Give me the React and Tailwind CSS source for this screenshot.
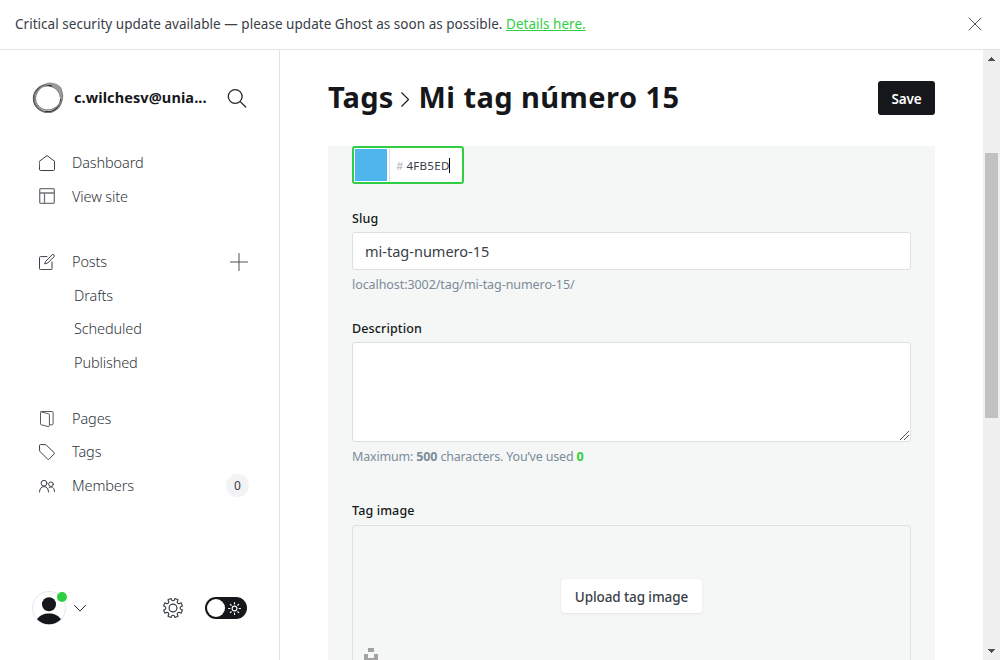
import React from 'react';

const line = { fill: 'none', stroke: 'currentColor', strokeLinecap: 'round', strokeLinejoin: 'round' };

function Icon({ size = 16, box = 16, width = 1, className = '', children }) {
  return (
    <svg width={size} height={size} viewBox={`0 0 ${box} ${box}`} {...line} strokeWidth={width} className={`shrink-0 ${className}`}>
      {children}
    </svg>
  );
}

const HomeIcon = () => (
  <Icon><path d="M.5 6.2 8 .6l7.500 5.600V14.500a1 1 0 0 1-1 1h-13a1 1 0 0 1-1-1Z" /></Icon>
);
const LayoutIcon = () => (
  <Icon className="text-[#70767c]" width={1.3}><rect x=".7" y=".7" width="14.600" height="14.600" rx="1" /><path d="M.7 5h14.600M5.500 5v10.300" /></Icon>
);
const PostsIcon = () => (
  <Icon>
    <path d="M8 2.600H1.500a1 1 0 0 0-1 1v11a1 1 0 0 0 1 1h10.500a1 1 0 0 0 1-1V8" />
    <path d="m6.800 7.200 6.200-6.300a1.300 1.300 0 0 1 1.900 0 1.300 1.300 0 0 1 0 1.900L8.700 9l-2.600.800Z" />
  </Icon>
);
const PagesIcon = () => (
  <Icon className="text-[#555b62]">
    <path d="M11 13.800h2.100a1 1 0 0 0 1-1V1.500a1 1 0 0 0-1-1H2.500a1 1 0 0 0-1 1v11.300a1 1 0 0 0 .8 1l6.900 1.700a1 1 0 0 0 1.200-1V3.800a1 1 0 0 0-.8-1L2 .8" />
  </Icon>
);
const TagIcon = () => (
  <Icon><path d="M.5 1.500a1 1 0 0 1 1-1L6.200.700a2 2 0 0 1 1.200.500l7.700 7.400a1 1 0 0 1 0 1.400l-5 5.200a1 1 0 0 1-1.400 0L1.100 7.600a2 2 0 0 1-.5-1.200Z" /></Icon>
);
const MembersIcon = () => (
  <Icon>
    <circle cx="5" cy="5.200" r="2.900" /><path d="M.5 14c0-3.200 1.800-5.400 4.500-5.400S9.500 10.800 9.500 14" />
    <circle cx="12" cy="6.200" r="2.300" /><path d="M10 9.800c.500-.500 1.200-.900 2-.9 2.100 0 3.500 1.900 3.500 4.600" />
  </Icon>
);

function NavItem({ icon, label, children }) {
  return (
    <div className="flex h-[33.6px] items-center text-[#394047]">
      <span className="flex w-[33px] shrink-0">{icon}</span>
      <span className="grow text-[14.500px] font-[350] tracking-[-0.12px] text-[#30363c]">{label}</span>
      {children}
    </div>
  );
}

function SubItem({ label }) {
  return <div className="flex h-[33.6px] items-center pl-[35px] text-[14.500px] font-[350] tracking-[-0.12px] text-[#30363c]">{label}</div>;
}

function Banner() {
  return (
    <header className="flex h-[50px] shrink-0 items-center justify-between border-b border-[#dfe1e3] px-[15px] text-[13.500px] text-[#394047]">
      <p className="pb-px tracking-[0.03px] whitespace-nowrap">
        Critical security update available — please update Ghost as soon as possible.{' '}
        <a className="text-[#30cf43] underline" href="#">Details here.</a>
      </p>
      <Icon size={14} box={14} className="mr-[3px] mb-px text-[#4c5157]"><path d="m1 1 12 12M13 1 1 13" /></Icon>
    </header>
  );
}

function Sidebar() {
  return (
    <aside className="flex w-[280px] shrink-0 flex-col border-r border-[#dfe1e3] pr-[30px] pl-[32px]">
      <div className="mt-8 flex h-8 items-center">
        <svg width="32" height="32" viewBox="0 0 32 32" fill="none" className="shrink-0">
          <ellipse cx="15.300" cy="16.600" rx="13.600" ry="13.300" stroke="#333" strokeWidth="1.700" />
          <ellipse cx="17" cy="15.100" rx="14" ry="12.400" transform="rotate(-35 17 15.100)" stroke="#888" strokeWidth="1.400" />
          <ellipse cx="16" cy="16.300" rx="14.300" ry="14" transform="rotate(70 16 16.300)" stroke="#777" strokeWidth="1" />
          <path d="M14 2.200C20 .6 27 3 29.300 8M20 3.600c6 2 9.500 8 9 13.400" stroke="#999" strokeWidth="2.200" />
        </svg>
        <span className="ml-[10px] grow text-[14.500px] font-bold tracking-[0.1px] text-[#15171a]">c.wilchesv@unia...</span>
        <Icon size={20} box={20} width={1.3} className="mr-[2px] text-[#24272b]">
          <circle cx="8.200" cy="8.500" r="6.900" /><path d="m13.200 13.600 5.500 5.400" />
        </Icon>
      </div>
      <nav className="mt-8 flex flex-col pl-[7px]">
        <NavItem icon={<HomeIcon />} label="Dashboard" />
        <NavItem icon={<LayoutIcon />} label="View site" />
        <div className="mt-[32px]">
          <NavItem icon={<PostsIcon />} label="Posts">
            <Icon size={18} box={18} className="mr-px text-[#4c5157]"><path d="M9 .5v17M.5 9h17" /></Icon>
          </NavItem>
          <SubItem label="Drafts" />
          <SubItem label="Scheduled" />
          <SubItem label="Published" />
        </div>
        <div className="mt-[22.300px]">
          <NavItem icon={<PagesIcon />} label="Pages" />
          <NavItem icon={<TagIcon />} label="Tags" />
          <NavItem icon={<MembersIcon />} label="Members">
            <span className="flex size-[23px] items-center justify-center rounded-full bg-[#f1f3f4] pt-px text-[12px]">0</span>
          </NavItem>
        </div>
      </nav>
      <div className="mt-auto mb-[34px] flex h-9 items-center">
        <div className="relative size-[34px] shrink-0">
          <svg width="34" height="34" viewBox="0 0 34 34">
            <circle cx="17" cy="17" r="16.500" fill="#fff" stroke="#e5e7e9" />
            <circle cx="17" cy="13.300" r="7" fill="#15171a" />
            <path d="M5 28.300C7.500 24.500 12 22.500 17 22.500s9.500 2 12 5.800A16.500 16.500 0 0 1 17 33.300 16.500 16.500 0 0 1 5 28.300Z" fill="#15171a" />
          </svg>
          <span className="absolute top-[1px] left-[25px] size-[10px] rounded-full bg-[#30cf43]" />
        </div>
        <Icon size={12} box={12} className="ml-[8px] text-[#24272b]"><path d="m.600 3.500 5.400 5.600 5.400-5.600" /></Icon>
        <Icon size={20} box={20} width={1.2} className="ml-[77px] text-[#394047]">
          <circle cx="10" cy="10" r="3.900" />
          <path d="M8.500 1.700a1.600 1.600 0 0 0 3 0L12 .500l3 1.200-.500 1.500a1.600 1.600 0 0 0 2.200 2.200l1.500-.500 1.200 3-1.200.600a1.600 1.600 0 0 0 0 3l1.200.600-1.200 3-1.500-.500a1.600 1.600 0 0 0-2.200 2.200l.500 1.500-3 1.200-.500-1.200a1.600 1.600 0 0 0-3 0L8 19.500l-3-1.200.500-1.500a1.600 1.600 0 0 0-2.200-2.200l-1.500.500-1.200-3 1.200-.600a1.600 1.600 0 0 0 0-3L.600 7.900l1.200-3 1.500.500a1.600 1.600 0 0 0 2.200-2.200L5 1.700 8 .500Z" />
        </Icon>
        <div className="ml-[22px] flex h-[22px] w-[42px] items-center rounded-full bg-[#15171a] px-[2px]">
          <span className="size-[18px] rounded-full bg-white" />
          <Icon size={13} box={12} className="ml-[3px] text-white">
            <circle cx="6" cy="6" r="2.200" />
            <path d="M6 .5v1.300M6 10.200v1.300M.5 6h1.300M10.200 6h1.300M2.100 2.100l.9.900M9 9l.9.900M2.100 9.900 3 9M9 3l.9-.9" />
          </Icon>
        </div>
      </div>
    </aside>
  );
}

function Scrollbar() {
  return (
    <div className="flex w-[17px] shrink-0 flex-col items-center bg-[#f0f0f0]">
      <svg width="17" height="17" viewBox="0 0 17 17" shapeRendering="crispEdges"><path d="M5 11h7L8.500 7Z" fill="#505050" /></svg>
      <div className="mt-[86px] h-[265px] w-[13px] bg-[#c1c1c1]" />
      <svg className="mt-auto" width="17" height="17" viewBox="0 0 17 17" shapeRendering="crispEdges"><path d="M5 6h7l-3.500 4Z" fill="#505050" /></svg>
    </div>
  );
}

function Label({ children }) {
  return <div className="h-[18px] pt-px text-[12.500px] leading-[18px] font-medium tracking-[0.12px] text-[#15171a]">{children}</div>;
}

function TagForm() {
  return (
    <section className="min-h-0 grow overflow-hidden bg-[#f4f7f6] px-6">
      <div className="flex h-[38px] w-[112px] items-center rounded-[3px] border-2 border-[#30cf43] bg-white">
        <span className="ml-px size-8 bg-[#4fb5ed]" />
        <span className="ml-[2px] h-[34px] w-px bg-[#dfe1e3]" />
        <span className="ml-[6px] pt-px text-[11.500px] text-[#abb4be]">#</span>
        <span className="-mr-px ml-[3px] pt-px text-[11.500px] tracking-[0.3px] text-[#394047]">4FB5ED</span>
        <span className="h-[15px] w-px bg-black" />
      </div>
      <div className="mt-[25px]">
        <Label>Slug</Label>
        <div className="mt-[5px] flex h-[38px] items-center rounded-[3px] border border-[#dddfe0] bg-white px-3 pt-px text-[14.500px] text-[#394047]">mi-tag-numero-15</div>
        <p className="mt-[5px] h-5 text-[12.500px] leading-5 tracking-[-0.07px] text-[#7c8b9a]">localhost:3002/tag/mi-tag-numero-15/</p>
      </div>
      <div className="mt-6">
        <Label>Description</Label>
        <div className="mt-[5px] flex h-[100px] items-end justify-end rounded-[3px] border border-[#dddfe0] bg-white">
          <svg width="10" height="10" viewBox="0 0 10 10" shapeRendering="crispEdges" stroke="#505050"><path d="m0 9 8.500-8.500M4 9l4.500-4.500" /></svg>
        </div>
        <p className="mt-[5px] h-5 text-[12.500px] leading-5 tracking-[-0.17px] text-[#7c8b9a]">
          Maximum: <b>500</b> characters. You’ve used <b className="text-[#30cf43]">0</b>
        </p>
      </div>
      <div className="mt-[34px]">
        <Label>Tag image</Label>
        <div className="mt-[6px] flex h-[180px] flex-col items-center rounded-[3px] border border-[#dddfe0]">
          <button className="mt-[53px] h-[34px] w-[141px] shrink-0 rounded-[3px] bg-white pt-[2px] text-[13.500px] font-medium tracking-[-0.1px] text-[#394047] shadow-[0_0_1px_rgba(0,0,0,.15),0_1px_2px_rgba(0,0,0,.06)]">Upload tag image</button>
          <svg className="mt-[35px] ml-[11px] self-start" width="14" height="14" viewBox="0 0 14 14" fill="#a3a3a3"><path d="M4 0h6v4H4zM0 6h4v4h6V6h4v8H0z" /></svg>
        </div>
      </div>
    </section>
  );
}

export default function App() {
  return (
    <div className="flex h-[660px] w-[1000px] flex-col overflow-hidden bg-white font-['Noto_Sans','Open_Sans',sans-serif]">
      <Banner />
      <div className="flex min-h-0 grow">
        <Sidebar />
        <main className="flex min-w-0 grow flex-col pr-12 pl-12">
          <div className="flex h-24 shrink-0 items-center justify-between">
            <h1 className="flex items-center pb-[2px] text-[29px] font-bold text-[#15171a]">
              <span className="tracking-[0.2px]">Tags</span>
              <Icon size={15} box={14} className="mx-[5px] mt-[5px]"><path d="m3.500.700 6.300 6.300-6.300 6.300" /></Icon>
              <span className="tracking-[0.45px]">Mi tag número 15</span>
            </h1>
            <button className="h-[34px] w-[57px] rounded-[3px] bg-[#15171a] pt-[2px] text-[13.500px] font-semibold tracking-[-0.2px] text-white">Save</button>
          </div>
          <TagForm />
        </main>
        <Scrollbar />
      </div>
    </div>
  );
}
